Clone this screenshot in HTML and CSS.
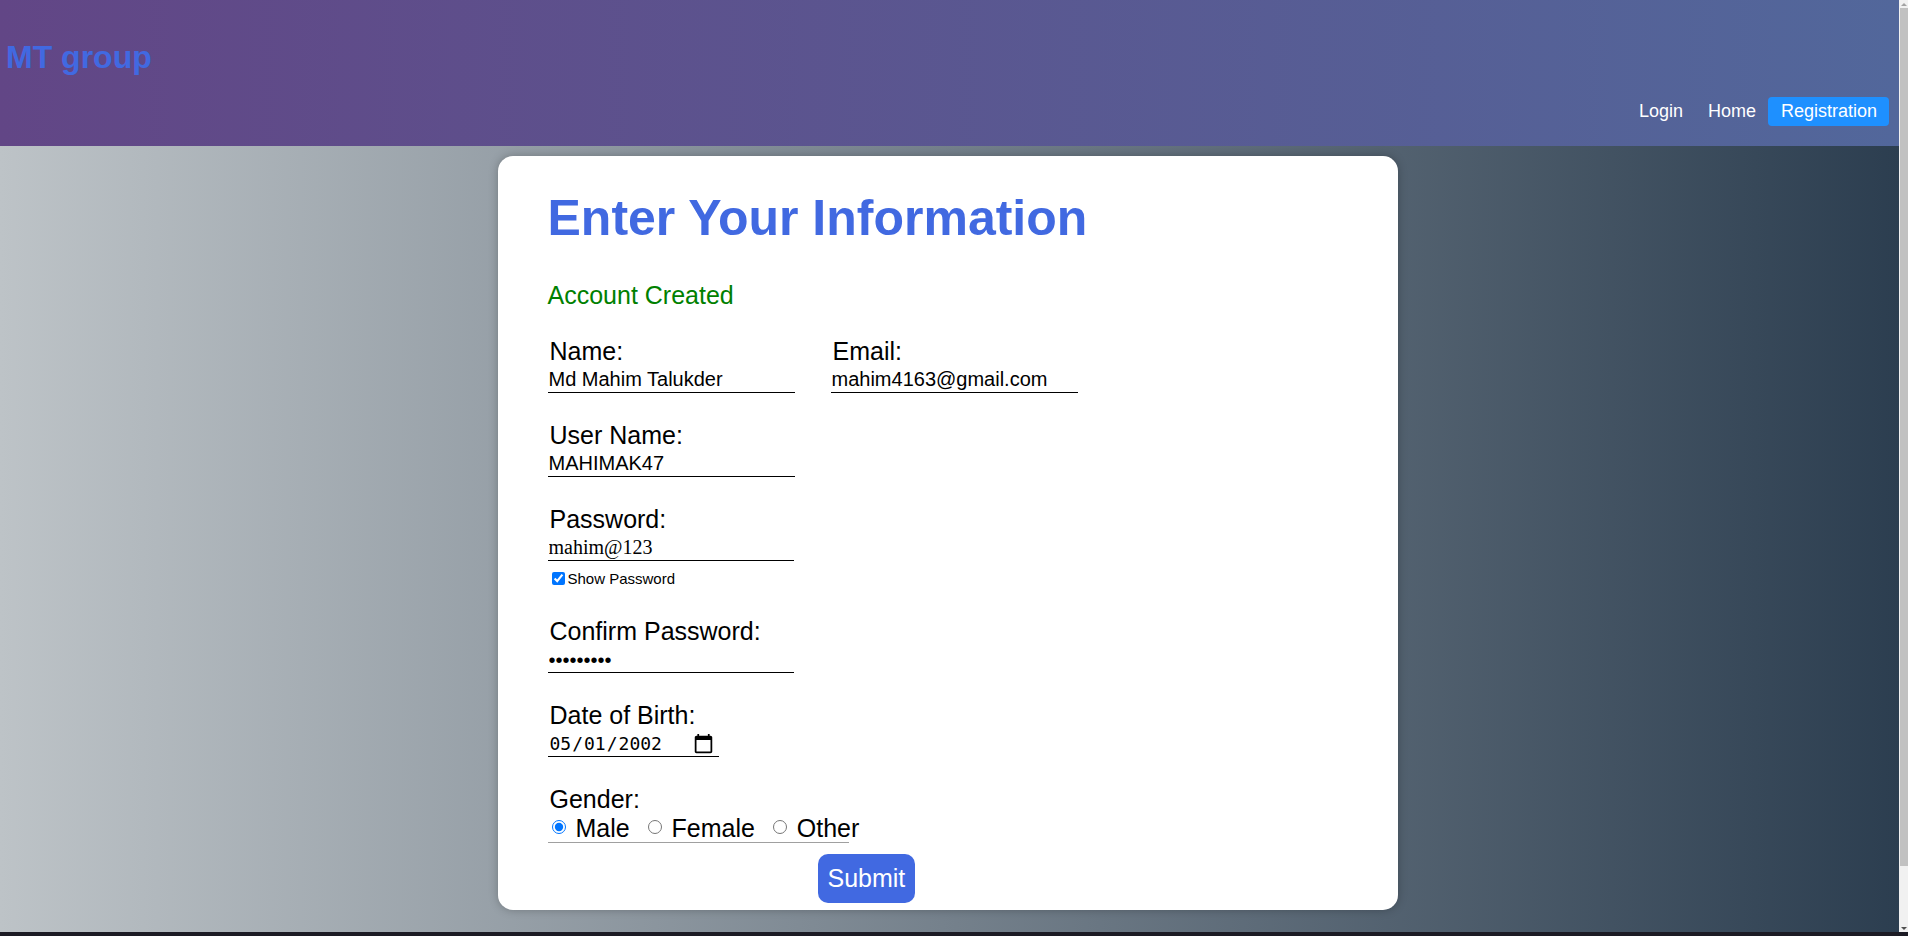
FILE: index.html
```html
<!DOCTYPE html>
<html lang="en">
<head>
<meta charset="utf-8">
<title>Registration - MT group</title>
<link rel="stylesheet" href="styles.css">
</head>
<body>
<div class="screen">
  <div class="viewport">
    <div class="page">
      <header class="topbar">
        <h1 class="brand">MT group</h1>
        <nav class="nav">
          <a class="nav-link" href="#">Login</a>
          <a class="nav-link" href="#">Home</a>
          <a class="nav-link active" href="#">Registration</a>
        </nav>
      </header>
      <main class="main">
        <section class="card">
          <h2 class="title">Enter Your Information</h2>
          <p class="status">Account Created</p>
          <form class="form">
            <div class="row">
              <div class="field">
                <label class="lbl">Name:</label>
                <input class="inp" type="text" value="Md Mahim Talukder">
              </div>
              <div class="field">
                <label class="lbl">Email:</label>
                <input class="inp" type="email" value="mahim4163@gmail.com">
              </div>
            </div>
            <div class="field">
              <label class="lbl">User Name:</label>
              <input class="inp" type="text" value="MAHIMAK47">
            </div>
            <div class="field">
              <label class="lbl">Password:</label>
              <input class="inp inp-serif" type="text" value="mahim@123">
              <div class="show"><input class="chk" type="checkbox" checked><span>Show Password</span></div>
            </div>
            <div class="field">
              <label class="lbl">Confirm Password:</label>
              <input class="inp inp-pass" type="password" value="mahim@123">
            </div>
            <div class="field">
              <label class="lbl">Date of Birth:</label>
              <input class="inp inp-date" type="date" value="2002-05-01">
            </div>
            <div class="field field-last">
              <label class="lbl">Gender:</label>
              <div class="radios"><input class="radio" type="radio" name="g" checked> <span class="opt">Male</span> <input class="radio" type="radio" name="g"> <span class="opt">Female</span> <input class="radio" type="radio" name="g"> <span class="opt">Other</span></div>
            </div>
            <button class="submit" type="button">Submit</button>
          </form>
        </section>
      </main>
    </div>
    <div class="scrollbar">
      <div class="sb-arrow sb-up"></div>
      <div class="sb-thumb"></div>
      <div class="sb-track"></div>
      <div class="sb-arrow sb-down"></div>
    </div>
  </div>
  <div class="taskbar"></div>
</div>
</body>
</html>
```
FILE: styles.css
```css
html, body {
  margin: 0;
  padding: 0;
  height: 936px;
  overflow: hidden;
}
body {
  font-family: "Liberation Sans", Arial, sans-serif;
}
.screen {
  height: 936px;
  display: flex;
  flex-direction: column;
}
.viewport {
  flex: 1;
  display: flex;
  min-height: 0;
}
.page {
  flex: 1;
  background: linear-gradient(to right, #bdc3c7, #2c3e50);
  overflow: hidden;
}
.topbar {
  height: 146px;
  display: flex;
  justify-content: space-between;
  align-items: flex-start;
  background: linear-gradient(to right, #624686, #52679b);
}
.brand {
  margin: 39px 0 0 6px;
  font-size: 32px;
  font-weight: 700;
  color: #4169e1;
  line-height: normal;
}
.nav {
  align-self: flex-end;
  margin: 0 10px 20px 0;
  display: flex;
}
.nav-link {
  display: block;
  padding: 4px 12px 4px 13px;
  font-size: 18px;
  line-height: 21px;
  color: #fff;
  text-decoration: none;
  border-radius: 4px;
}
.nav-link.active {
  background: #1e90ff;
  padding: 4px 12px 4px 13px;
}
.main {
  display: flex;
  justify-content: center;
  padding: 10px 4px 0 0;
}
.card {
  width: 900px;
  box-sizing: border-box;
  padding: 34px 50px 7px;
  background: #fff;
  border-radius: 15px;
  box-shadow: 0 0 10px rgba(0, 0, 0, 0.25);
}
.title {
  margin: 0;
  font-size: 50px;
  font-weight: 700;
  line-height: 57px;
  color: #4169e1;
}
.status {
  margin: 34px 0 0;
  font-size: 25px;
  line-height: 29px;
  color: #008000;
}
.form {
  margin-top: 27px;
}
.row {
  display: flex;
  gap: 36px;
}
.field {
  display: flex;
  flex-direction: column;
  align-items: flex-start;
  margin-bottom: 28px;
}
.field-last {
  margin-bottom: 0;
}
.lbl {
  display: block;
  padding-left: 2px;
  font-size: 25px;
  line-height: 29px;
  color: #000;
}
.inp {
  display: block;
  width: 247px;
  height: 26px;
  box-sizing: border-box;
  margin: 1px 0 0;
  padding: 1px 1px;
  border: 0;
  border-bottom: 1px solid #000;
  border-radius: 0;
  background: transparent;
  outline: none;
  font-family: "Liberation Sans", Arial, sans-serif;
  font-size: 20px;
  line-height: 23px;
  color: #000;
}
.inp-serif {
  font-family: "Liberation Serif", "Times New Roman", serif;
  width: 246px;
}
.inp-pass {
  width: 246px;
  padding-top: 3px;
}
.inp-date {
  width: 171px;
  font-family: "DejaVu Sans Mono", monospace;
  font-size: 18px;
  padding: 0 1px;
}
.inp-date::-webkit-calendar-picker-indicator {
  width: 21px;
  height: 21px;
  padding: 0;
  margin: 0 4px 0 0;
  opacity: 1;
  background: url("data:image/svg+xml,%3Csvg xmlns='http://www.w3.org/2000/svg' viewBox='1 0 22 24'%3E%3Cpath fill='%23000' d='M20 3h-1V1h-2v2H7V1H5v2H4c-1.1 0-2 .9-2 2v16c0 1.1.9 2 2 2h16c1.1 0 2-.9 2-2V5c0-1.1-.9-2-2-2zm0 18H4V8h16v13z'/%3E%3C/svg%3E") center / 21px 21px no-repeat;
}
.show {
  margin-top: 7px;
  height: 21px;
  display: flex;
  align-items: center;
  font-size: 15px;
  color: #000;
}
.chk {
  width: 13px;
  height: 13px;
  margin: 0 3px 0 4px;
}
.radios {
  width: 301px;
  height: 28px;
  white-space: nowrap;
  font-size: 25px;
  line-height: 28px;
  color: #000;
  border-bottom: 1px solid #a0a0a0;
}
.radio {
  width: 14px;
  height: 14px;
  margin: 0 3px 0 4px;
  vertical-align: 3px;
}
.opt {
  margin-right: 7px;
}
.submit {
  display: block;
  margin: 11px 0 0 270px;
  padding: 10px;
  border: 0;
  border-radius: 10px;
  background: #4169e1;
  color: #fff;
  font-family: "Liberation Sans", Arial, sans-serif;
  font-size: 25px;
  line-height: 29px;
}
.scrollbar {
  width: 9px;
  display: flex;
  flex-direction: column;
  background: #f1f1f1;
}
.sb-arrow {
  height: 8px;
  display: flex;
  justify-content: center;
  align-items: center;
}
.sb-up::before {
  content: "";
  border-left: 3px solid transparent;
  border-right: 3px solid transparent;
  border-bottom: 3px solid #a3a3a3;
}
.sb-down::before {
  content: "";
  border-left: 3px solid transparent;
  border-right: 3px solid transparent;
  border-top: 3px solid #505050;
}
.sb-thumb {
  height: 858px;
  margin-left: 1px;
  background: #c1c1c1;
}
.sb-track {
  flex: 1;
}
.taskbar {
  height: 4px;
  background: #1c1b24;
}
```
